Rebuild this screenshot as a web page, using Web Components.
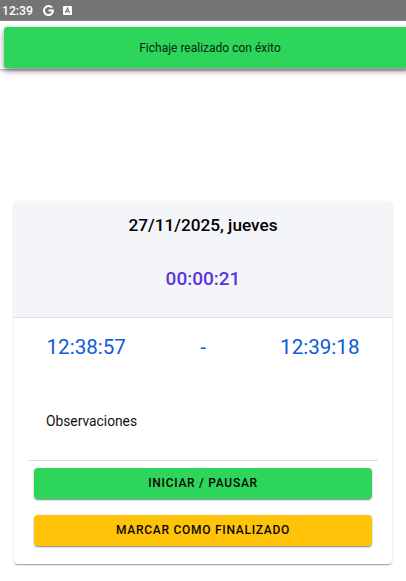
<!DOCTYPE html>
<html lang="es">

  <head>
    <meta charset="UTF-8">
    <meta name="viewport" content="width=device-width, initial-scale=1.0">
    <title>Fichaje</title>
    <style>
      :root {
        --success: #2dd55b;
        --warning: #ffc409;
        --primary: #0f5bd8;
        --accent: #5a35dc;
        --light: #f4f5f8;
      }

      body {
        margin: 0;
        height: 581px;
        overflow: hidden;
        background: #fff;
        color: #000;
        font-family: Roboto, sans-serif;
      }
    </style>
  </head>

  <body>
    <status-bar>12:39</status-bar>
    <toast-area>
      <app-toast>Fichaje realizado con éxito</app-toast>
    </toast-area>

    <time-card>
      <span slot="date">27/11/2025, jueves</span>
      <span slot="elapsed">00:00:21</span>
      <time-range>
        <span slot="start">12:38:57</span>
        <span slot="end">12:39:18</span>
      </time-range>
      <notes-item>Observaciones</notes-item>
      <app-button style="--button-color: var(--success)">Iniciar / Pausar</app-button>
      <app-button style="--button-color: var(--warning)">Marcar como finalizado</app-button>
    </time-card>

    <script>
      customElements.define('status-bar', class extends HTMLElement {
        constructor() {
          super();
          this.attachShadow({ mode: 'open' }).innerHTML = `
            <style>
              :host {
                display: flex;
                align-items: center;
                box-sizing: border-box;
                height: 21px;
                padding: 1px 0 0 2px;
                background: #757575;
                border-bottom: 1px solid #8c8c8c;
                color: #fff;
                font-size: 12.2px;
                font-weight: 500;
              }
              .time { width: 41px; }
              svg { display: block; }
              .letter { margin-left: 9px; }
            </style>
            <span class="time"><slot></slot></span>
            <svg width="11" height="11" viewBox="0 0 22 22">
              <path d="M18 5.4A9 9 0 1 0 20 11H11" fill="none" stroke="#fff" stroke-width="4"/>
            </svg>
            <svg class="letter" width="9" height="9" viewBox="0 0 18 18">
              <rect width="18" height="18" rx="2" fill="#fff"/>
              <path d="M5 14L9 4L13 14M6.5 11H11.5" fill="none" stroke="#757575" stroke-width="2.2"/>
            </svg>
          `;
        }
      });

      customElements.define('toast-area', class extends HTMLElement {
        constructor() {
          super();
          this.attachShadow({ mode: 'open' }).innerHTML = `
            <style>
              :host {
                display: block;
                box-sizing: border-box;
                height: 48px;
                padding: 6px 0 0 4px;
                box-shadow: 0 1px 3px rgba(0, 0, 0, .4);
                clip-path: inset(0 0 -20px 0);
              }
            </style>
            <slot></slot>
          `;
        }
      });

      customElements.define('app-toast', class extends HTMLElement {
        constructor() {
          super();
          this.attachShadow({ mode: 'open' }).innerHTML = `
            <style>
              :host {
                display: flex;
                align-items: center;
                justify-content: center;
                width: 412px;
                height: 41px;
                border-radius: 3px;
                background: var(--success);
                box-shadow: 0 3px 5px -1px rgba(0, 0, 0, .25), 0 4px 8px rgba(0, 0, 0, .16), 0 1px 6px rgba(0, 0, 0, .14);
                color: #06280f;
                font-size: 12px;
              }
            </style>
            <slot></slot>
          `;
        }
      });

      customElements.define('time-card', class extends HTMLElement {
        constructor() {
          super();
          this.attachShadow({ mode: 'open' }).innerHTML = `
            <style>
              :host {
                display: block;
                box-sizing: border-box;
                width: 378px;
                height: 363px;
                margin: 132px auto 0;
                overflow: hidden;
                border-radius: 4px;
                background: #fff;
                box-shadow: 0 2px 1px -1px rgba(0, 0, 0, .2), 0 1px 1px rgba(0, 0, 0, .14), 0 1px 3px rgba(0, 0, 0, .12);
              }
              header {
                display: flex;
                flex-direction: column;
                align-items: center;
                box-sizing: border-box;
                height: 117px;
                padding-top: 12px;
                border-bottom: 1px solid #dfe0e4;
                background: var(--light);
                font-weight: 500;
              }
              .date {
                font-size: 17.2px;
                line-height: 24px;
              }
              .elapsed {
                margin-top: 29px;
                color: var(--accent);
                font-size: 19px;
                line-height: 26px;
              }
            </style>
            <header>
              <div class="date"><slot name="date"></slot></div>
              <div class="elapsed"><slot name="elapsed"></slot></div>
            </header>
            <slot></slot>
          `;
        }
      });

      customElements.define('time-range', class extends HTMLElement {
        constructor() {
          super();
          this.attachShadow({ mode: 'open' }).innerHTML = `
            <style>
              :host {
                display: flex;
                justify-content: space-between;
                padding: 16px 32.5px 0;
                color: var(--primary);
                font-size: 20.6px;
                line-height: 26px;
              }
            </style>
            <slot name="start"></slot>
            <span>-</span>
            <slot name="end"></slot>
          `;
        }
      });

      customElements.define('notes-item', class extends HTMLElement {
        constructor() {
          super();
          this.attachShadow({ mode: 'open' }).innerHTML = `
            <style>
              :host {
                display: block;
                box-sizing: border-box;
                height: 84px;
                margin: 17px 14px 7px;
                padding: 34px 18px 0;
                border-bottom: 1px solid #dedede;
                color: #111;
                font-size: 13.8px;
                line-height: 20px;
              }
            </style>
            <slot></slot>
          `;
        }
      });

      customElements.define('app-button', class extends HTMLElement {
        constructor() {
          super();
          this.attachShadow({ mode: 'open' }).innerHTML = `
            <style>
              :host {
                display: block;
                margin: 0 20px 16px;
              }
              button {
                display: block;
                width: 100%;
                height: 31px;
                padding: 0;
                border: 0;
                border-radius: 4px;
                background: var(--button-color);
                box-shadow: 0 2px 1px -1px rgba(0, 0, 0, .25), 0 1px 2px rgba(0, 0, 0, .2), 0 1px 3px rgba(0, 0, 0, .12);
                color: #080800;
                font: 500 12px/31px Roboto, sans-serif;
                letter-spacing: .73px;
                text-transform: uppercase;
              }
            </style>
            <button><slot></slot></button>
          `;
        }
      });
    </script>
  </body>

</html>
